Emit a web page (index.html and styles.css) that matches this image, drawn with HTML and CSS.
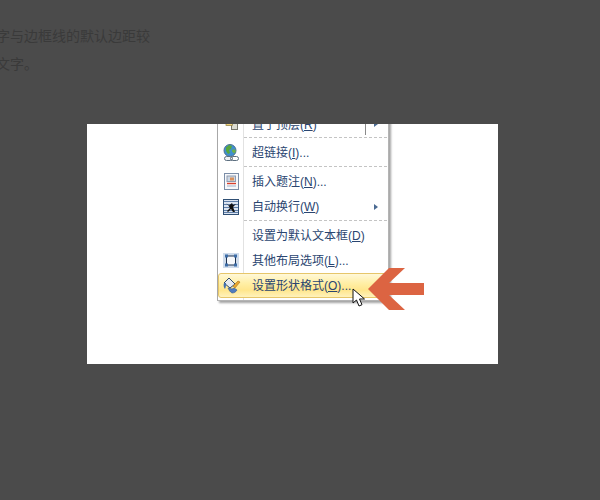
FILE: index.html
```html
<!DOCTYPE html>
<html lang="zh-CN">
<head>
<meta charset="utf-8">
<title>设置形状格式</title>
<link rel="stylesheet" href="styles.css">
</head>
<body>
<div class="article">
  <p>字与边框线的默认边距较</p>
  <p>文字。</p>
</div>
<div class="figure">
  <div class="menu">
    <div class="row row-clipped">
      <span class="icon"><svg width="16" height="16" viewBox="0 0 16 16"><rect x="8.500" y="3.500" width="6" height="10" fill="#dcdcd2" stroke="#77776c"/><rect x="3" y="4" width="6.500" height="5.500" fill="#efd27a" stroke="#8a7a3c" stroke-width=".7"/></svg></span>
      <span class="label">置于顶层(<u>R</u>)</span>
      <span class="split"></span><span class="caret"></span>
    </div>
    <div class="sep"></div>
    <div class="row">
      <span class="icon"><svg width="17" height="18" viewBox="0 0 17 18"><circle cx="7" cy="6.500" r="6" fill="#3f8fd0" stroke="#4d7190"/><path d="M3 3.500l3-2.500 3 1-1 3-2 1 1 3-2 1-2-3z" fill="#58a83c"/><path d="M9 5.500h3l1 2-2 2-2-2z" fill="#6cb04a"/><rect x="1.500" y="12.500" width="8" height="4" rx="2" fill="#eef1f4" stroke="#5d6f80"/><rect x="7.500" y="12.500" width="8" height="4" rx="2" fill="none" stroke="#5d6f80"/></svg></span>
      <span class="label">超链接(<u>I</u>)...</span>
    </div>
    <div class="sep"></div>
    <div class="row">
      <span class="icon"><svg width="15" height="17" viewBox="0 0 15 17"><rect x="0.500" y="0.500" width="14" height="16" fill="#f7f8fb" stroke="#7c8ea8"/><rect x="3" y="3" width="8.500" height="5.500" fill="#cfd8e4" stroke="#8f9bb0"/><rect x="6" y="4.500" width="4" height="3" fill="#d9905a"/><path d="M3 10.500h9" stroke="#d8402c" stroke-width="1.400"/><path d="M3 13h9" stroke="#9fb0c8"/></svg></span>
      <span class="label">插入题注(<u>N</u>)...</span>
    </div>
    <div class="row">
      <span class="icon"><svg width="16" height="16" viewBox="0 0 16 16"><rect x=".5" y=".5" width="15" height="15" fill="#dbe4f1" stroke="#2f4f74"/><path d="M1 2.500h14M1 5.500h14M1 8.500h14M1 11.500h14M1 13.500h14" stroke="#5f7ea8"/><path d="M3 4l3 2.500 3-2.500 1 2 3-1-3 3 2 5-2 0-2-3-3 3-1-1 3-3-2-3z" fill="#101010"/></svg></span>
      <span class="label">自动换行(<u>W</u>)</span>
      <span class="caret"></span>
    </div>
    <div class="sep"></div>
    <div class="row">
      <span class="icon"></span>
      <span class="label">设置为默认文本框(<u>D</u>)</span>
    </div>
    <div class="row">
      <span class="icon"><svg width="16" height="15" viewBox="0 0 16 15"><rect width="16" height="15" fill="#cfdcec"/><rect x="3.500" y="3" width="9" height="9" fill="#f7f9fc" stroke="#1f3350"/><rect x="2" y="1.500" width="3" height="3" fill="#3d6da8"/><rect x="11" y="1.500" width="3" height="3" fill="#3d6da8"/><rect x="2" y="10.500" width="3" height="3" fill="#3d6da8"/><rect x="11" y="10.500" width="3" height="3" fill="#3d6da8"/></svg></span>
      <span class="label">其他布局选项(<u>L</u>)...</span>
    </div>
    <div class="row row-active">
      <span class="icon"><svg width="18" height="17" viewBox="0 0 18 17"><path d="M1 6l5-5 6 6-5 4z" fill="#e6ebf1" stroke="#2f4a68"/><path d="M1 6c-1 2 0 5 1 6 1-2 1-4 1-6z" fill="#3f6fb0"/><path d="M5 11c1 2 2 4 4 5 2 0 4-1 5-3l-3-2-2 1z" fill="#4f7cc0" stroke="#2f5590" stroke-width=".6"/><path d="M10 9l5-5 2 1-5 6z" fill="#e8a72e" stroke="#a8701a" stroke-width=".6"/></svg></span>
      <span class="label">设置形状格式(<u>O</u>)...</span>
    </div>
  </div>
  <svg class="pointer" width="60" height="46" viewBox="0 0 60 46"><polygon points="0,21 21,0 37,0 21,15 56,15 56,27 21,27 37,42 21,42" fill="#dc6442"/></svg>
  <svg class="cursor" width="15" height="20" viewBox="0 0 15 20"><path d="M1 1v14l3.500-3 2.500 6 3-1.300-2.500-5.700h5z" fill="#fff" stroke="#111"/></svg>
</div>
</body>
</html>
```
FILE: styles.css
```css
* { box-sizing: border-box; }
html, body { margin: 0; padding: 0; }
body {
  width: 600px;
  height: 500px;
  overflow: hidden;
  background: #4b4b4b;
  font-family: "Liberation Sans", "Noto Sans CJK SC", sans-serif;
}
.article {
  padding-top: 22px;
  margin-left: -4px;
  height: 124px;
  color: #3a3a3a;
  font-size: 14px;
  line-height: 28px;
}
.article p { margin: 0; white-space: nowrap; }
.figure {
  position: relative;
  width: 411px;
  height: 240px;
  margin-left: 87px;
  background: #fff;
  overflow: hidden;
}
.menu {
  width: 172px;
  margin: -12px 0 0 130px;
  padding: 0 1px 2px 0;
  background: linear-gradient(to right, #fff 25px, #e2e2e2 25px, #e2e2e2 26px, #fff 26px);
  border-left: 1px solid #a8a8a8;
  border-right: 1px solid #b4b4b4;
  border-bottom: 1px solid #b4b4b4;
  box-shadow: 2px 2px 2px rgba(90, 90, 90, .55);
  color: #2a4570;
  font-size: 12px;
}
.row {
  display: flex;
  align-items: center;
  height: 25px;
}
.row-clipped { height: 24px; }
.row-active {
  width: 170px;
  border: 1px solid #e6c66a;
  border-radius: 3px;
  background: linear-gradient(to bottom, #fff8d8 0%, #ffefa6 40%, #ffe68c 70%, #fff2bc 100%);
}
.icon {
  flex: none;
  width: 26px;
  display: flex;
  align-items: center;
  justify-content: center;
}
.label {
  margin-left: 8px;
  padding-bottom: 2px;
  white-space: nowrap;
}
.row-active .icon { width: 25px; }
.split {
  width: 1px;
  height: 22px;
  margin-left: auto;
  background: #8a8a8a;
}
.caret {
  width: 0;
  height: 0;
  margin: 0 9px 0 auto;
  border-style: solid;
  border-width: 3.500px 0 3.500px 4px;
  border-color: transparent transparent transparent #4a6a92;
}
.split + .caret { margin-left: 8px; }
.sep {
  height: 4px;
  margin-left: 26px;
  padding-top: 1px;
}
.sep::before {
  content: "";
  display: block;
  border-top: 1px dashed #c4c4c4;
}
.pointer { position: absolute; left: 281px; top: 144px; }
.cursor { position: absolute; left: 265px; top: 164px; }
```
